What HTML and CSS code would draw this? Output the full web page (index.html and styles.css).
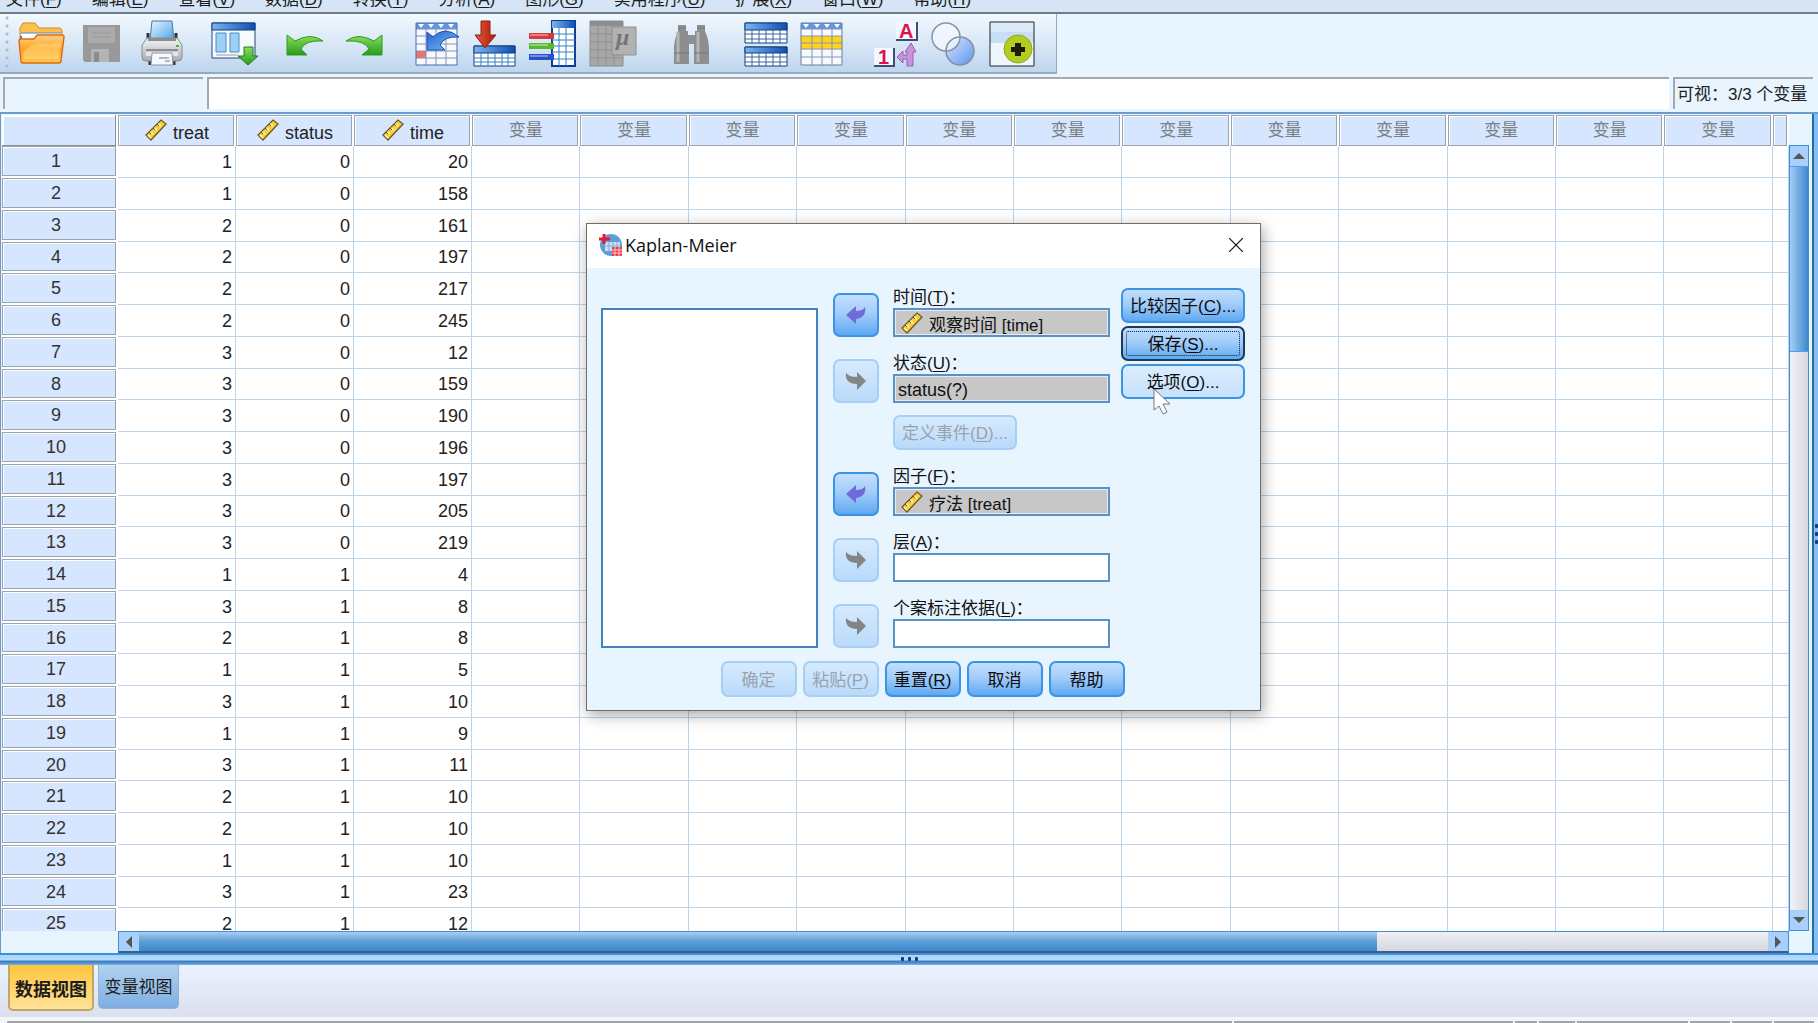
FILE: index.html
```html
<!DOCTYPE html>
<html lang="zh-CN">
<head>
<meta charset="utf-8">
<title>数据编辑器</title>
<link rel="stylesheet" href="styles.css">
</head>
<body>
<svg class="defs" aria-hidden="true">
  <defs>
    <linearGradient id="gFolder" x1="0" y1="0" x2="0" y2="1"><stop offset="0" stop-color="#ffd08a"/><stop offset=".5" stop-color="#ffa320"/><stop offset="1" stop-color="#ffc94e"/></linearGradient>
    <linearGradient id="gBlueH" x1="0" y1="0" x2="1" y2="0"><stop offset="0" stop-color="#7db4ef"/><stop offset="1" stop-color="#0a4fb4"/></linearGradient>
    <linearGradient id="gGreen" x1="0" y1="0" x2="0" y2="1"><stop offset="0" stop-color="#8be05a"/><stop offset="1" stop-color="#279a1c"/></linearGradient>
    <linearGradient id="gBlue" x1="0" y1="0" x2="1" y2="1"><stop offset="0" stop-color="#2463d0"/><stop offset="1" stop-color="#7fc0f8"/></linearGradient>
    <linearGradient id="gPaper" x1="0" y1="0" x2="1" y2="1"><stop offset="0" stop-color="#e8f7ff"/><stop offset="1" stop-color="#4a9fe4"/></linearGradient>
    <linearGradient id="gMetal" x1="0" y1="0" x2="0" y2="1"><stop offset="0" stop-color="#f6f6f6"/><stop offset="1" stop-color="#a9abae"/></linearGradient>
    <linearGradient id="gVenn" x1="0" y1="0" x2="1" y2="1"><stop offset="0" stop-color="#d8e8ff"/><stop offset="1" stop-color="#5e93ee"/></linearGradient>
    <linearGradient id="gRed" x1="0" y1="0" x2="1" y2="0"><stop offset="0" stop-color="#e8573a"/><stop offset="1" stop-color="#a81c0c"/></linearGradient>
    <symbol id="ruler" viewBox="0 0 22 22">
      <path d="M1 16 16 1l5 4L6 21z" fill="#f7cf3c" stroke="#6d5a24" stroke-width="1.3"/>
      <path d="m5 13 3 2m1-6 3 2m1-6 3 2M3 16l3 3" stroke="#fff3a8" stroke-width="1.6"/>
      <path d="m4 13 2 2m2-6 2 2m2-6 2 2" stroke="#5a4a1c" stroke-width="1"/>
    </symbol>
    <symbol id="arrowLeft" viewBox="0 0 22 20"><path d="M1 10 11 1v5c4 0 7-1 9-4 1 6-1 11-9 12v5z"/></symbol>
    <symbol id="arrowRight" viewBox="0 0 22 20"><path d="M21 10 12 1v5C7 6 4 5 1 2c-1 7 3 11 11 11v6z"/></symbol>
  </defs>
</svg>

<div class="app">
  <nav class="menubar">
    <button>文件(<u>F</u>)</button><button>编辑(<u>E</u>)</button><button>查看(<u>V</u>)</button><button>数据(<u>D</u>)</button><button>转换(<u>T</u>)</button><button>分析(<u>A</u>)</button><button>图形(<u>G</u>)</button><button>实用程序(<u>U</u>)</button><button>扩展(<u>X</u>)</button><button>窗口(<u>W</u>)</button><button>帮助(<u>H</u>)</button>
  </nav>

  <div class="toolbar" role="toolbar">
    <div class="tool-group">
      <button aria-label="打开"><svg viewBox="0 0 58 56">
        <path d="M8 26V12l3-5h12l4 5h21l2 2v13z" fill="#fdc04a" stroke="#d98718"/>
        <path d="M9 17h40v10H9z" fill="#fff"/><path d="M9 17h40" stroke="#4d8fd0"/><path d="M9 20v6" stroke="#3f80c8" stroke-width="2"/>
        <path d="M7 25q0-2 2-2h13l3-4h25q2 0 2 2l-3 24q0 2-2 2H11q-2 0-2-2z" fill="url(#gFolder)" stroke="#dd6a12" stroke-width="1.4"/>
        <path d="M11 37q8-12 26-9l12-2-2 17H12z" fill="#ffdc8a" opacity=".5"/>
      </svg></button>
      <button aria-label="保存" disabled><svg viewBox="0 0 58 56">
        <path d="M13 9h37v37H15l-2-2z" fill="#999"/><path d="M18 11h27v16H18z" fill="#ababab"/><path d="M22 17h19m-19 4h19" stroke="#999"/>
        <path d="M21 33h18v13H21z" fill="#b3b3b3"/><path d="M24 36h5v10h-5z" fill="#8c8c8c"/>
      </svg></button>
      <button aria-label="打印"><svg viewBox="0 0 58 56">
        <path d="M24 5h20l2 20H22z" fill="url(#gPaper)" stroke="#3c7cba"/>
        <path d="M20 17v7m28-7v7M22 44v5m24-5v5" stroke="#333" stroke-width="3"/>
        <path d="m19 22-5 7v12q0 4 4 4h32q4 0 4-4V29l-5-7z" fill="url(#gMetal)" stroke="#88898c"/>
        <path d="M20 22h28v3H20zM18 33h32v2H18z" fill="#8b8d90"/><path d="M18 36h32v4H18z" fill="#e4e5e8"/><path d="M48 30h3" stroke="#3cb83c" stroke-width="2"/>
        <path d="M24 37h20l1 12H23z" fill="#f4f8ff" stroke="#8896a8"/><path d="M31 42h10m-4 3h5" stroke="#778"/>
      </svg></button>
    </div>
    <div class="tool-group">
      <button aria-label="重新调用对话框"><svg viewBox="0 0 58 56">
        <path d="M10 7h43v35H10z" fill="#f5faff" stroke="#24457f"/><path d="M10 7h43v7H10z" fill="url(#gBlueH)" stroke="#183a78"/>
        <path d="M14 17h10v19H14zm14 0h9v19h-9z" fill="#9dd0f3" stroke="#4a8ec6"/><path d="M14 39h22" stroke="#99a" />
        <path d="M42 31h9v9h5L46 49 36 40h6z" fill="url(#gGreen)" stroke="#1c7a1c"/>
      </svg></button>
    </div>
    <div class="tool-group">
      <button aria-label="撤消"><svg viewBox="0 0 58 56"><path d="M11 19v20h20l-6-6q4-9 22-8-12-9-28 0z" fill="url(#gGreen)" stroke="#2e9a1e"/></svg></button>
      <button aria-label="重做"><svg viewBox="0 0 58 56"><path d="M48 19v20H28l7-6q-4-9-23-8 12-9 28 0z" fill="url(#gGreen)" stroke="#2e9a1e"/></svg></button>
    </div>
    <div class="tool-group">
      <button aria-label="转到个案"><svg viewBox="0 0 58 56">
        <path d="M8 7h41v42H8z" fill="#f6f9ff"/><path d="M8 7h41v6H8z" fill="#5f94e8"/>
        <path d="M8 35h10v7H8z" fill="#f07070"/>
        <path d="M8 13h41M8 20h41M8 28h41M8 35h41M8 42h41M18 7v42M28 7v42M38 7v42" stroke="#8494b4"/>
        <path d="M8 7h41v42H8z" fill="none" stroke="#4a6cab"/><path d="m10 8 3 4 3-4zm10 0 3 4 3-4zm10 0 3 4 3-4zm10 0 3 4 3-4z" fill="#fff"/>
        <path d="M19 16v18h18l-5-5q4-9 19-8-14-12-26 0z" fill="url(#gBlue)" stroke="#1f4da8"/>
      </svg></button>
      <button aria-label="转到变量"><svg viewBox="0 0 58 56">
        <path d="M8 30h41v20H8z" fill="#fff" stroke="#123a78"/><path d="M8 30h41v7H8z" fill="url(#gBlueH)" stroke="#123a78"/>
        <path d="M8 42h41M8 46h41M15 37v13M22 37v13M29 37v13M36 37v13M42 37v13" stroke="#2c83c6"/>
        <path d="M15 5h9v14h6L19 32 9 19h6z" fill="url(#gRed)" stroke="#8c1f12"/>
      </svg></button>
      <button aria-label="变量"><svg viewBox="0 0 58 56">
        <path d="M28 5h23v45H28z" fill="#fff" stroke="#0c3f96" stroke-width="2"/><path d="M28 5h23v7H28z" fill="url(#gBlueH)"/>
        <path d="M28 18h23M28 24h23M28 30h23M28 36h23M28 43h23M35 12v38M42 12v38" stroke="#2c83c6"/>
        <rect x="5" y="17" width="25" height="6" fill="#d83a3a"/><rect x="5" y="27" width="25" height="6" fill="#58b82c"/><rect x="5" y="38" width="25" height="6" fill="#2a50cc"/>
        <path d="M6 19h18M6 29h18M6 40h18" stroke="#fff" stroke-width="1" opacity=".7"/>
      </svg></button>
      <button aria-label="描述统计" disabled><svg viewBox="0 0 58 56">
        <path d="M8 5h33v45H8z" fill="#a8a8a8" stroke="#8c8c8c"/><path d="M8 5h33v5H8z" fill="#8e8e8e"/><path d="M8 18h33M8 26h33M8 34h33M8 42h33M16 10v40M24 10v40M32 10v40" stroke="#8f8f8f"/>
        <path d="M30 11h24v28H30z" fill="#b2b2b2" stroke="#8f8f8f"/><text x="34" y="29" class="mu">μ</text>
      </svg></button>
    </div>
    <div class="tool-group find">
      <button aria-label="查找" disabled><svg viewBox="0 0 58 56">
        <path d="M16 9h8v6h2v4h7v-4h2V9h8v6q4 9 4 18v15H32V28h-5v20H12V33q0-9 4-18z" fill="#8c8e90"/>
        <path d="M16 16v30m20-30v30" stroke="#b4b5b6" stroke-width="3"/><path d="M12 37h15m5 0h15M16 12h8m11 0h8" stroke="#77797b"/>
      </svg></button>
    </div>
    <div class="tool-group">
      <button aria-label="拆分文件"><svg viewBox="0 0 58 56">
        <path d="M9 7h42v20H9zM9 31h42v19H9z" fill="#fff" stroke="#123a78"/><path d="M9 7h42v7H9zM9 31h42v6H9z" fill="url(#gBlueH)" stroke="#123a78"/>
        <path d="M9 18h42M9 23h42M9 41h42M9 46h42M16 14v13M23 14v13M30 14v13M37 14v13M44 14v13M16 37v13M23 37v13M30 37v13M37 37v13M44 37v13" stroke="#3a62a0"/>
      </svg></button>
      <button aria-label="选择个案"><svg viewBox="0 0 58 56">
        <path d="M7 7h41v42H7z" fill="#f6f9ff"/><path d="M7 7h41v6H7z" fill="#5f94e8"/><path d="M7 20h41v13H7z" fill="#ffd21c"/>
        <path d="M7 13h41M7 20h41M7 27h41M7 33h41M7 41h41M18 7v42M28 7v42M38 7v42" stroke="#8494b4"/>
        <path d="M7 7h41v42H7z" fill="none" stroke="#6c7f9c"/><path d="m9 8 3 4 3-4zm11 0 3 4 3-4zm10 0 3 4 3-4zm10 0 3 4 3-4z" fill="#fff"/>
      </svg></button>
    </div>
    <div class="tool-group">
      <button aria-label="值标签"><svg viewBox="0 0 58 56">
        <path d="M28 6h21v18H28zM6 32h20v18H6z" fill="#f3f7ff"/><path d="M28 24h21V6M6 50h20V32" fill="none" stroke="#3c4e74" stroke-width="2"/>
        <text x="31" y="22" class="tile">A</text><text x="10" y="48" class="tile">1</text>
        <path d="m43 27 5 9h-3v14h-6v-7h-4v4l-6-6 6-6v4h4v-3h-2z" fill="#c994da" stroke="#9a5fb4"/>
      </svg></button>
      <button aria-label="使用变量集"><svg viewBox="0 0 58 56">
        <circle cx="34" cy="35" r="14" fill="url(#gVenn)" stroke="#7f92b0"/><circle cx="20" cy="21" r="14" fill="#f4f8ff" fill-opacity=".75" stroke="#8a93a3" stroke-width="1.5"/>
        <circle cx="34" cy="35" r="14" fill="none" stroke="#8593ac" stroke-width="1.5"/>
      </svg></button>
      <button aria-label="定制工具栏"><svg viewBox="0 0 58 56">
        <path d="M6 6h44v44H6z" fill="#eef6fd"/><path d="M6 6h44v21H6z" fill="#c6dff4"/><path d="M6 6h44v10H6z" fill="#dcebf9"/><path d="M6 6h44v44H6z" fill="none" stroke="#222"/>
        <circle cx="34" cy="33" r="14" fill="#b3cc22" stroke="#93a61e"/><path d="M31 27h6v4h4v5h-4v4h-6v-4h-4v-5h4z" fill="#1c1c08"/>
      </svg></button>
    </div>
  </div>

  <div class="cellbar">
    <output class="cell-name"></output>
    <input class="cell-value" type="text" aria-label="单元格值">
    <div class="visible">可视：3/3 个变量</div>
  </div>

  <main class="editor">
    <div class="grid-area">
      <div class="table-clip">
        <table class="data">
          <colgroup id="cols"><col class="c-num"><col class="c-var"><col class="c-var"><col class="c-var"></colgroup>
          <thead><tr id="head"><th class="corner"></th>
            <th><svg class="ruler"><use href="#ruler"/></svg>treat</th>
            <th><svg class="ruler"><use href="#ruler"/></svg>status</th>
            <th><svg class="ruler"><use href="#ruler"/></svg>time</th></tr></thead>
          <tbody id="rows"></tbody>
        </table>
      </div>
      <div class="vscroll">
        <button aria-label="向上"><svg viewBox="0 0 12 8"><path d="m0 7 6-6 6 6z"/></svg></button>
        <div class="track"><div class="thumb"></div></div>
        <button aria-label="向下"><svg viewBox="0 0 12 8"><path d="m0 1 6 6 6-6z"/></svg></button>
      </div>
      <div class="hscroll">
        <button aria-label="向左"><svg viewBox="0 0 8 12"><path d="m7 0-6 6 6 6z"/></svg></button>
        <div class="track"><div class="thumb"></div></div>
        <button aria-label="向右"><svg viewBox="0 0 8 12"><path d="m1 0 6 6-6 6z"/></svg></button>
      </div>
    </div>
    <div class="side-split"><i></i><i></i><i></i></div>
  </main>
  <div class="splitter"><i></i><i></i><i></i></div>

  <div class="tabs">
    <button class="tab active">数据视图</button>
    <button class="tab">变量视图</button>
  </div>
  <div class="statusbar"><span></span><span></span><span></span><span></span><span></span><span></span><span></span><span></span></div>
</div>

<section class="dialog" role="dialog" aria-labelledby="dlg-title">
  <header class="dlg-title">
    <svg viewBox="0 0 24 24" class="logo"><circle cx="12" cy="12" r="11" fill="#5d9fd6"/><path d="M6 9h15v9H6z" fill="#c9def0"/><path d="M6 13h15M10 9v9m4-9v9m4-9v9" stroke="#7fb0dc"/><path d="M5 1v10M0 6h11" stroke="#e01c38" stroke-width="3"/><path d="M13 14h10v9H13z" fill="#e8404c"/><path d="M13 17h10m-10 3h10m-7-6v9m4-9v9" stroke="#ffc4c4"/></svg>
    <h1 id="dlg-title">Kaplan-Meier</h1>
    <button class="close" aria-label="关闭"><svg viewBox="0 0 14 14"><path d="m0 0 14 14M14 0 0 14" stroke="#111" stroke-width="1.2"/></svg></button>
  </header>
  <div class="dlg-body">
    <select class="source" multiple aria-label="变量列表"></select>
    <div class="targets">
      <div class="target">
        <button class="btn move" aria-label="移回"><svg><use href="#arrowLeft"/></svg></button>
        <div><label for="f-time">时间(<u>T</u>)：</label>
          <div class="field filled"><svg class="ruler"><use href="#ruler"/></svg><input id="f-time" readonly value="观察时间 [time]"></div></div>
      </div>
      <div class="target">
        <button class="btn move" disabled aria-label="移入"><svg><use href="#arrowRight"/></svg></button>
        <div><label for="f-status">状态(<u>U</u>)：</label>
          <div class="field filled"><input id="f-status" readonly value="status(?)"></div></div>
      </div>
      <button class="btn wide define" disabled>定义事件(<u>D</u>)...</button>
      <div class="target">
        <button class="btn move" aria-label="移回"><svg><use href="#arrowLeft"/></svg></button>
        <div><label for="f-factor">因子(<u>F</u>)：</label>
          <div class="field filled"><svg class="ruler"><use href="#ruler"/></svg><input id="f-factor" readonly value="疗法 [treat]"></div></div>
      </div>
      <div class="target">
        <button class="btn move" disabled aria-label="移入"><svg><use href="#arrowRight"/></svg></button>
        <div><label for="f-strata">层(<u>A</u>)：</label>
          <div class="field"><input id="f-strata"></div></div>
      </div>
      <div class="target">
        <button class="btn move" disabled aria-label="移入"><svg><use href="#arrowRight"/></svg></button>
        <div><label for="f-label">个案标注依据(<u>L</u>)：</label>
          <div class="field"><input id="f-label"></div></div>
      </div>
    </div>
    <div class="options">
      <button class="btn wide">比较因子(<u>C</u>)...</button>
      <button class="btn wide focused">保存(<u>S</u>)...</button>
      <button class="btn wide hover">选项(<u>O</u>)...</button>
    </div>
  </div>
  <footer class="dlg-footer">
    <button class="btn" disabled>确定</button>
    <button class="btn" disabled>粘贴(<u>P</u>)</button>
    <button class="btn">重置(<u>R</u>)</button>
    <button class="btn">取消</button>
    <button class="btn">帮助</button>
  </footer>
  <svg class="cursor" viewBox="0 0 18 28"><path d="M1 1v21l5-4 4 8 4-2-4-8h7z" fill="#fff" stroke="#777"/></svg>
</section>
<script src="app.js"></script>
</body>
</html>
```

FILE: styles.css
```css
* { box-sizing: border-box; }
body {
  margin: 0;
  font: 17px/24px "Liberation Sans", "Noto Sans CJK SC", sans-serif;
  color: #1c1c1c;
  overflow: hidden;
}
button, input, select { font: inherit; color: inherit; margin: 0; padding: 0; }
button { border: 0; background: none; white-space: nowrap; }
u { text-underline-offset: 2px; }
.defs { position: absolute; width: 0; height: 0; }

.app { height: 100vh; display: flex; flex-direction: column; background: #e8f4fe; }

/* menu and toolbar */
.menubar {
  flex: none; height: 14px; padding-left: 6px; display: flex; align-items: flex-end; gap: 30px;
  overflow: hidden; background: #d5e5f5; border-bottom: 2px solid #6f7c8a;
}
.menubar button { flex: none; height: 24px; line-height: 24px; }
.toolbar {
  flex: none; align-self: flex-start; height: 60px; padding: 2px 14px 0 12px; display: flex; gap: 16px;
  background: radial-gradient(circle, #a9bccf 1px, transparent 2px) 4px 0 / 6px 8px repeat-y,
    linear-gradient(#f1f8ff, #dae8f7 50%, #bdd5ee);
  border: solid #9aa9b8; border-width: 0 1px 2px 0;
}
.tool-group { display: flex; }
.tool-group.find { padding-left: 6px; }
.tool-group button { width: 58px; height: 56px; }
.tool-group svg { display: block; width: 58px; height: 56px; fill: none; }
.mu { font: italic bold 24px "Liberation Serif", serif; fill: #757575; }
.tile { font: bold 20px "Liberation Sans", sans-serif; fill: #e0104c; }

.cellbar { flex: none; height: 38px; padding: 3px 5px 3px 3px; display: flex; gap: 4px; }
.cell-name, .cell-value, .visible { border: solid #a4a9b0; border-width: 2px 0 0 2px; }
.cell-name { flex: none; width: 200px; }
.cell-value { flex: 1; min-width: 0; background: #fff; border-radius: 0; outline: 0; }
.visible { flex: none; width: 140px; padding-left: 2px; line-height: 31px; white-space: nowrap; color: #222; }

/* data grid */
.editor { flex: 1; min-height: 0; display: flex; border-top: 2px solid #6a9bd0; border-left: 1px solid #6a9bd0; }
.grid-area {
  flex: 1; min-width: 0; display: grid; grid-template: minmax(0, 1fr) 22px / 116px minmax(0, 1fr) 20px;
  padding: 1px 3px 0 1px; border-right: 2px solid #1f6da8;
}
.table-clip { grid-column: 1 / 3; overflow: hidden; background: #fff; }
.data { width: 100%; table-layout: fixed; border-collapse: separate; border-spacing: 0; font-size: 18px; }
.c-num { width: 116px; }
.c-var { width: 118px; }
.c-tail { width: 16px; }
.data th, .data td { padding: 0; height: 32px; line-height: 24px; overflow: hidden; white-space: nowrap; }
.data tbody tr:nth-child(4n) > * { height: 31px; }
.data th {
  height: 31px; font-weight: normal; text-align: center; vertical-align: middle; background: #d5e6fe; background-clip: padding-box;
  border-right: 2px solid #fff; box-shadow: inset 0 0 0 1px #9ba3ad, inset 2px 2px 0 0 #fff;
}
.data thead th { color: #222; padding: 2px 0 0 2px; }
.data thead th.empty { color: #7a7f86; font-size: 17px; padding: 0 0 0 1px; }
.data thead th.corner { box-shadow: inset -1px -1px 0 0 #8a9097, inset 2px 2px 0 0 #fff; }
.data tbody th { border-bottom: 2px solid #fff; padding-right: 6px; color: #333; }
.data td { text-align: right; padding-right: 3px; background: #fff; color: #222; border: solid #bcd4ea; border-width: 0 1px 1px 0; }
.ruler { width: 22px; height: 22px; margin: 0 6px 0 0; vertical-align: -2px; }

/* scroll bars */
.vscroll { grid-column: 3; display: flex; flex-direction: column; margin-top: 30px; border: 1px solid #3f8edb; }
.hscroll { grid-column: 2; display: flex; border: 1px solid #3f8edb; border-bottom: 2px solid #3d5f86; }
.vscroll button, .hscroll button { flex: none; width: 20px; height: 19px; display: grid; place-items: center; background: #a9d0fa; }
.vscroll button { width: 18px; height: 20px; }
.vscroll svg { width: 12px; height: 8px; fill: #555; }
.hscroll svg { width: 8px; height: 12px; fill: #555; }
.vscroll .track, .hscroll .track { flex: 1; background: linear-gradient(#f0f0f4, #d6d6e0); }
.vscroll .track { background: linear-gradient(90deg, #f2f2f6, #d6d6e0); }
.vscroll .thumb { height: 25%; background: linear-gradient(90deg, #a4cdf4, #3e88cd); border: solid #4d9ff0; border-width: 1px 0; }
.hscroll .thumb { height: 100%; width: 76%; background: linear-gradient(#a9cdf0, #5c9ed8 50%, #3c86cc); }

.side-split { flex: none; width: 4px; display: flex; flex-direction: column; justify-content: center; align-items: center; gap: 4px; background: #86bdf2; }
.splitter {
  flex: none; height: 12px; display: flex; justify-content: center; align-items: center; gap: 4px;
  background: linear-gradient(#3f8edb 2px, #a8d4fa 2px, #b5dcfb 7px, #3b7cbd 8px, #4d90d0 10px, #7fb4e4 12px);
}
.splitter i, .side-split i { width: 3px; height: 4px; background: #0f3f80; border-radius: 1px; }

/* sheet tabs */
.tabs { flex: none; height: 52px; padding-left: 8px; display: flex; align-items: flex-start; gap: 4px; background: linear-gradient(#e8f3ff, #dddfec); }
.tab { width: 81px; height: 44px; padding-top: 3px; background: linear-gradient(#b2d3f0, #7dade0); border: 1px solid #8db6de; border-top: 0; border-radius: 0 0 5px 5px; }
.tab.active { width: 86px; height: 46px; padding-top: 6px; font-size: 18px; font-weight: bold; background: linear-gradient(#ffc53c, #ffe299); border: 2px solid #c0a765; border-top: 0; }
.statusbar { flex: none; height: 6px; padding: 4px 4px 0 7px; display: flex; gap: 2px; background: #f2f7fe; }
.statusbar span { flex: 0 0 40px; background: #a3a3a8; }
.statusbar span:nth-child(1) { flex: 1 1 auto; }
.statusbar span:nth-child(2) { flex-basis: 279px; }
.statusbar span:nth-child(3) { flex-basis: 22px; }
.statusbar span:nth-child(4) { flex-basis: 36px; }
.statusbar span:nth-child(5) { flex-basis: 111px; }

/* dialog */
.dialog {
  position: absolute; left: 586px; top: 223px; width: 675px;
  background: #e8f4fe; border: 1px solid #6d6d6d; box-shadow: 2px 4px 14px rgba(0, 0, 0, .35); color: #111;
}
.dlg-title { display: flex; align-items: center; height: 44px; padding: 0 16px 2px 12px; background: #fff; }
.logo { width: 24px; height: 24px; }
.dlg-title h1 { flex: 1; margin: 0 0 0 2px; font: 18px/24px "Open Sans", "Noto Sans", sans-serif; }
.close { width: 16px; height: 16px; }
.close svg { display: block; width: 14px; height: 14px; margin: 0 auto; }
.dlg-body { display: grid; grid-template-columns: 217px 1fr 124px; padding: 15px 15px 0 14px; }
.source { width: 100%; height: auto; margin-top: 25px; background: #fff; border: 2px solid #4382bb; border-radius: 0; outline: 0; }
.targets { display: flex; flex-direction: column; gap: 12px; padding: 0 11px 0 15px; }
.target { display: grid; grid-template-columns: 46px 1fr; gap: 14px; align-items: end; }
.target label { display: block; height: 25px; line-height: 30px; white-space: nowrap; }
.field { height: 29px; display: flex; align-items: center; background: #fff; border: 2px solid #5a92c8; }
.field.filled { background: #c7c7c7; box-shadow: inset 0 0 0 1px #e6eaf0; }
.field .ruler { flex: none; margin: 0 6px; }
.field input { flex: 1; min-width: 0; width: 100%; height: 25px; padding: 2px 0 0; border: 0; outline: 0; background: none; }
.field input:first-child { padding: 4px 0 0 3px; }
#f-status { font-size: 18px; }
.btn {
  width: 76px; height: 36px; padding-top: 3px; border: 2px solid #3c93e2; border-radius: 7px; color: #0c0c0c;
  background: linear-gradient(#c2defc, #a3cdfa 45%, #5ea9f2);
}
.btn.wide { width: 124px; height: 35px; }
.btn.move { width: 46px; height: 44px; padding: 0; display: grid; place-items: center; }
.move svg { width: 22px; height: 20px; fill: #6f6bd8; }
.btn:disabled { color: #9aa3ad; border-color: #a6cff5; background: linear-gradient(#d6eafd, #b9dafb); }
.move:disabled svg { fill: #858585; }
.define { margin-left: 60px; }
.options { display: flex; flex-direction: column; gap: 3px; padding-top: 5px; }
.btn.focused { border-color: #1c3a5c; outline: 1px dotted #123; outline-offset: -6px; }
.btn.hover { background: linear-gradient(#dcedfe, #c6e1fd); }
.dlg-footer { display: flex; justify-content: center; gap: 6px; padding: 13px 2px 13px 0; }
.cursor { position: absolute; left: 566px; top: 164px; width: 18px; height: 28px; }
```

FILE: app.js
```js
const EMPTY_COLUMNS = 12;
const cases = [
  [1, 0, 20], [1, 0, 158], [2, 0, 161], [2, 0, 197], [2, 0, 217], [2, 0, 245],
  [3, 0, 12], [3, 0, 159], [3, 0, 190], [3, 0, 196], [3, 0, 197], [3, 0, 205],
  [3, 0, 219], [1, 1, 4], [3, 1, 8], [2, 1, 8], [1, 1, 5], [3, 1, 10], [1, 1, 9],
  [3, 1, 11], [2, 1, 10], [2, 1, 10], [1, 1, 10], [3, 1, 23], [2, 1, 12]
];

const cols = document.getElementById('cols');
const head = document.getElementById('head');
for (let i = 0; i < EMPTY_COLUMNS; i++) {
  cols.insertAdjacentHTML('beforeend', '<col>');
  head.insertAdjacentHTML('beforeend', '<th class="empty">变量</th>');
}
cols.insertAdjacentHTML('beforeend', '<col class="c-tail">');
head.insertAdjacentHTML('beforeend', '<th class="empty"></th>');

document.getElementById('rows').innerHTML = cases.map((row, i) =>
  `<tr><th>${i + 1}</th>${row.map(v => `<td>${v}</td>`).join('')}${'<td></td>'.repeat(EMPTY_COLUMNS + 1)}</tr>`
).join('');
```
